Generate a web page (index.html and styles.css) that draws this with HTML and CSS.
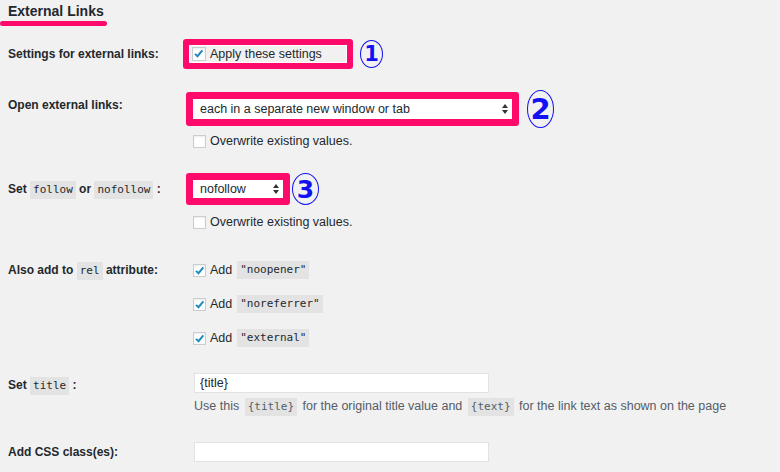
FILE: index.html
```html
<!DOCTYPE html>
<html lang="en">
<head>
    <meta charset="UTF-8">
    <meta name="viewport" content="width=device-width, initial-scale=1.0">
    <title>External Links</title>
    <link rel="stylesheet" href="styles.css">
</head>
<body>
    <div class="settings">
        <h2 class="section-title">External Links</h2>
        <div class="title-mark"></div>

        <!-- 1: enable -->
        <div class="row row-apply">
            <div class="label">Settings for external links:</div>
            <div class="field">
                <div class="marked">
                    <span class="mark mark-apply">
                        <span class="apply-box">
                            <span class="check checked"><svg viewBox="0 0 12 12"><path d="M2.2 6.4 L4.9 9 L10.2 2.6"/></svg></span>
                            Apply these settings
                        </span>
                    </span>
                    <span class="num num-1">1</span>
                </div>
            </div>
        </div>

        <!-- 2: target -->
        <div class="row row-open">
            <div class="label">Open external links:</div>
            <div class="field">
                <div class="marked">
                    <span class="mark">
                        <span class="select select-wide">
                            each in a separate new window or tab
                            <svg class="arrows" viewBox="0 0 6 10"><path d="M3 0 L6 4 H0 Z M3 10 L0 6 H6 Z"/></svg>
                        </span>
                    </span>
                    <span class="num num-2">2</span>
                </div>
                <div class="option option-first">
                    <span class="check"></span>Overwrite existing values.
                </div>
            </div>
        </div>

        <!-- 3: follow -->
        <div class="row row-follow">
            <div class="label">Set <code>follow</code> or <code>nofollow</code> :</div>
            <div class="field">
                <div class="marked">
                    <span class="mark">
                        <span class="select select-small">
                            nofollow
                            <svg class="arrows" viewBox="0 0 6 10"><path d="M3 0 L6 4 H0 Z M3 10 L0 6 H6 Z"/></svg>
                        </span>
                    </span>
                    <span class="num num-3">3</span>
                </div>
                <div class="option option-follow">
                    <span class="check"></span>Overwrite existing values.
                </div>
            </div>
        </div>

        <!-- rel -->
        <div class="row row-rel">
            <div class="label">Also add to <code>rel</code> attribute:</div>
            <div class="field rel-list">
                <div class="option">
                    <span class="check checked"><svg viewBox="0 0 12 12"><path d="M2.2 6.4 L4.9 9 L10.2 2.6"/></svg></span>Add <code>"noopener"</code>
                </div>
                <div class="option">
                    <span class="check checked"><svg viewBox="0 0 12 12"><path d="M2.2 6.4 L4.9 9 L10.2 2.6"/></svg></span>Add <code>"noreferrer"</code>
                </div>
                <div class="option">
                    <span class="check checked"><svg viewBox="0 0 12 12"><path d="M2.2 6.4 L4.9 9 L10.2 2.6"/></svg></span>Add <code>"external"</code>
                </div>
            </div>
        </div>

        <!-- title -->
        <div class="row row-title">
            <div class="label">Set <code>title</code> :</div>
            <div class="field">
                <div class="text-input">{title}</div>
                <p class="help">Use this <code>{title}</code> for the original title value and <code>{text}</code> for the link text as shown on the page</p>
            </div>
        </div>

        <!-- class -->
        <div class="row row-class">
            <div class="label">Add CSS class(es):</div>
            <div class="field">
                <div class="text-input"></div>
            </div>
        </div>
    </div>
</body>
</html>
```

FILE: styles.css
```css
:root {
    --text: #23282d;
    --marker: #fd0a6a;
    --ring: #1212f2;
    --code-bg: #e3e3e3;
    --box-border: #c9ccd0;
}

* {
    margin: 0;
    padding: 0;
    box-sizing: border-box;
}

body {
    background: #f1f1f1;
    font-family: "Liberation Sans", Arial, sans-serif;
    font-size: 12.5px;
    color: var(--text);
}

.settings {
    padding: 3px 8px 0;
}

.section-title {
    font-size: 14px;
    line-height: 17px;
    font-weight: bold;
}

/* pink underline under heading */
.title-mark {
    width: 107px;
    height: 5px;
    margin: 1px 0 0 -8px;
    background: var(--marker);
    border-radius: 3px;
}

.row {
    display: grid;
    grid-template-columns: 178px 1fr;
}

.label {
    font-size: 12px;
    font-weight: bold;
    line-height: 20px;
}

code {
    display: inline-block;
    font-family: "DejaVu Sans Mono", monospace;
    font-size: 11px;
    font-weight: normal;
    line-height: 18px;
    padding: 0 3px;
    background: var(--code-bg);
}

/* highlighted field + circled number */
.marked {
    display: flex;
    align-items: center;
}

.mark {
    display: inline-block;
    border: 7px solid var(--marker);
    border-radius: 3px;
}

.num {
    display: inline-flex;
    align-items: center;
    justify-content: center;
    border: 1.5px solid var(--ring);
    border-radius: 50%;
    color: var(--ring);
    font-family: "DejaVu Sans", sans-serif;
    font-weight: bold;
}

.num-1 {
    width: 23px;
    height: 28px;
    margin-left: 7px;
    font-size: 21px;
}

.num-2 {
    width: 27px;
    height: 38px;
    margin-left: 8px;
    font-size: 29px;
}

.num-3 {
    width: 27px;
    height: 32px;
    margin-left: 2px;
    font-size: 25px;
}

/* checkbox */
.check {
    display: inline-block;
    width: 13px;
    height: 13px;
    margin-right: 4px;
    background: #fff;
    border: 1px solid var(--box-border);
    box-shadow: inset 0 1px 2px rgba(0, 0, 0, 0.08);
    flex-shrink: 0;
}

.check svg {
    display: block;
    width: 11px;
    height: 11px;
}

.check svg path {
    fill: none;
    stroke: #1e8cbe;
    stroke-width: 2.2;
}

/* row 1 */
.row-apply {
    margin-top: 13px;
}

.row-apply .label {
    line-height: 30px;
}

.mark-apply {
    margin-left: -3px;
    border-width: 6px;
}

.apply-box {
    display: flex;
    align-items: center;
    width: 158px;
    height: 18px;
    padding-left: 2px;
    border: 1px solid #fff;
}

.apply-box .check {
    width: 14px;
    height: 14px;
}

/* selects */
.select {
    display: flex;
    align-items: center;
    justify-content: space-between;
    background: #fff;
    padding: 0 4px 0 7px;
}

.select-wide {
    width: 319px;
    height: 20px;
}

.select-small {
    width: 90px;
    height: 18px;
}

.arrows {
    width: 6px;
    height: 10px;
    fill: #333;
}

.option {
    display: flex;
    align-items: center;
    margin-left: 7px;
    line-height: 18px;
    height: 18px;
}

.option code {
    margin-left: 5px;
}

.option-first {
    margin-top: 4px;
}

/* row 2 */
.row-open {
    margin-top: 21px;
}

.row-open .label {
    padding-top: 5px;
}

/* row 3 */
.row-follow {
    margin-top: 23px;
}

.row-follow .label {
    padding-top: 6px;
}

.option-follow {
    margin-top: 8px;
}

/* rel */
.row-rel {
    margin-top: 30px;
}

.row-rel .label {
    line-height: 18px;
}

.rel-list {
    display: flex;
    flex-direction: column;
    gap: 16px;
}

/* text inputs */
.text-input {
    width: 295px;
    height: 20px;
    margin-left: 8px;
    padding: 0 5px;
    line-height: 18px;
    background: #fff;
    border: 1px solid #e2e2e2;
}

.help {
    margin: 4px 0 0 8px;
    line-height: 18px;
    color: #555d66;
}

.help code {
    margin: 0 2px;
}

.row-title {
    margin-top: 26px;
}

.row-title .label {
    padding-top: 2px;
}

.row-class {
    margin-top: 26px;
}
```
